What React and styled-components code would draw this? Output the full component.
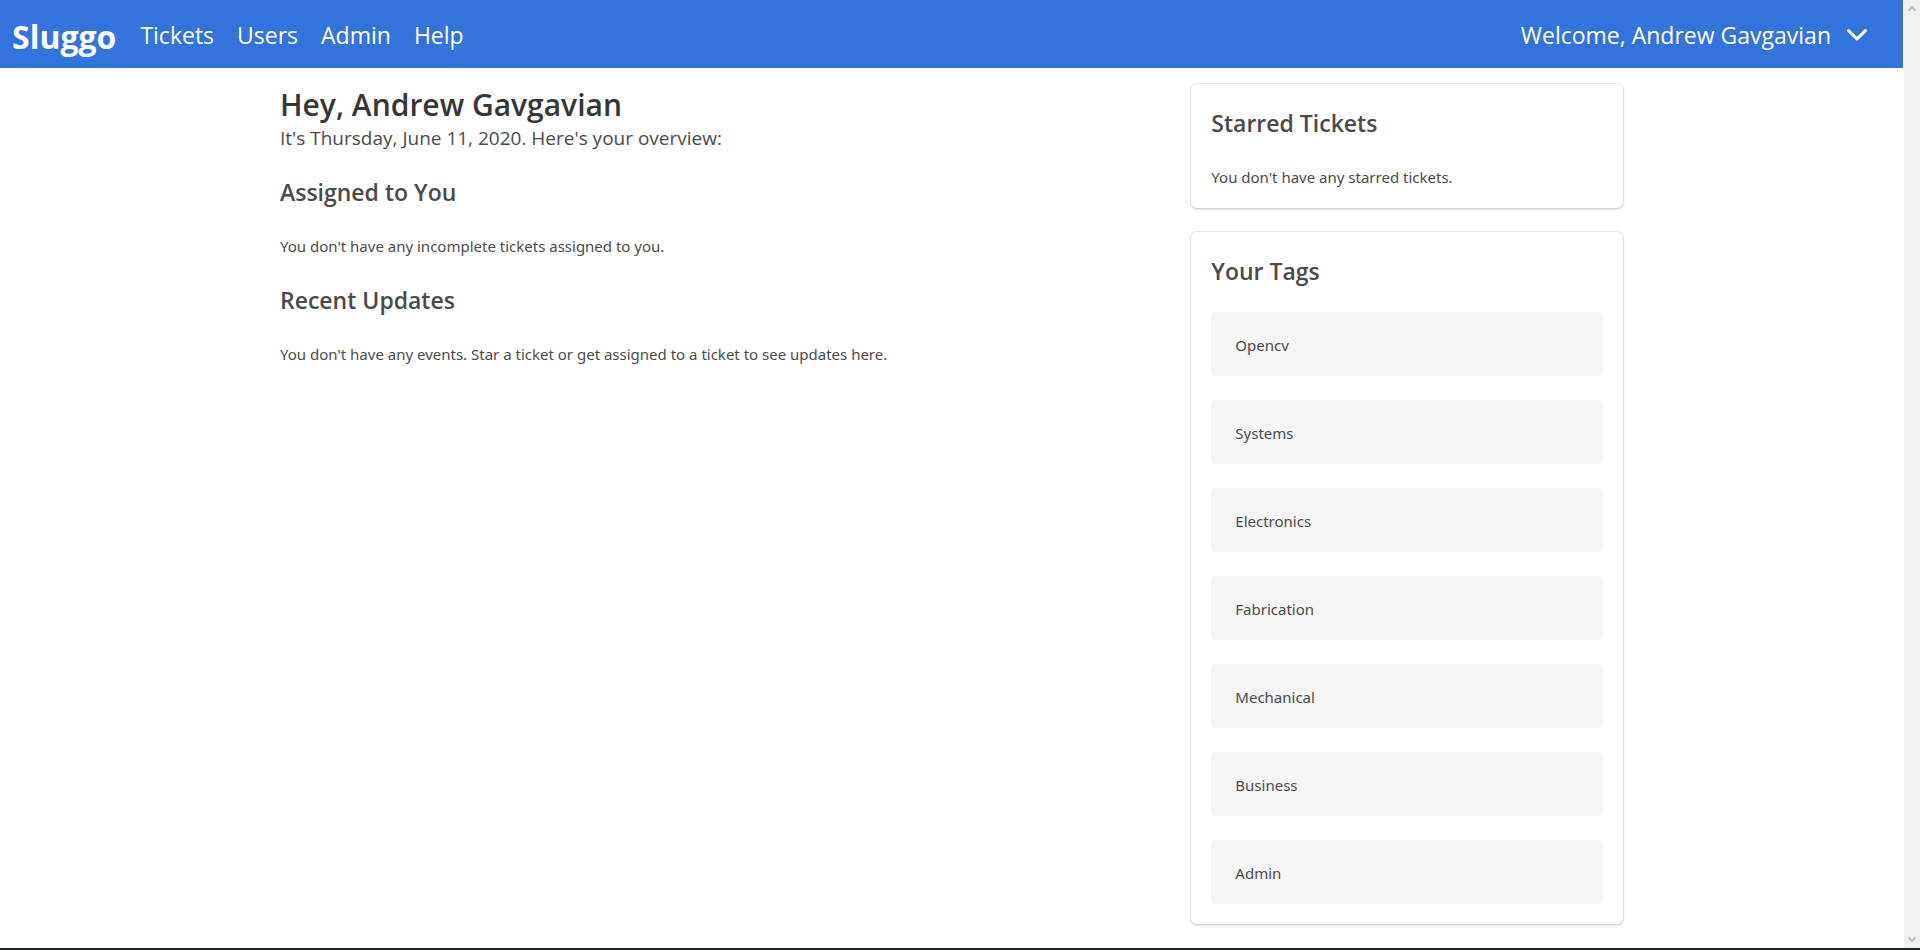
import React from "react";
import styled, { createGlobalStyle } from "styled-components";

const GlobalStyle = createGlobalStyle`
  *, *::before, *::after { box-sizing: border-box; }
  body {
    margin: 0;
    background: #fff;
    color: #4a4a4a;
    font-family: "Segoe UI", "Noto Sans", "Open Sans", sans-serif;
    font-size: 15px;
    line-height: 26px;
  }
  h1, h2, p, ul { margin: 0; padding: 0; font-weight: 400; }
`;

const displayFont = `"Segoe UI", "Open Sans", "Noto Sans", sans-serif`;

const Shell = styled.div`
  display: grid;
  grid-template-columns: minmax(0, 1fr) 17px;
  grid-template-rows: 1fr 2px;
  min-height: 100vh;
`;

const Page = styled.div`
  min-width: 0;
`;

const Navbar = styled.nav`
  display: flex;
  align-items: center;
  min-height: 68px;
  padding: 2px 36px 0 12px;
  background: #3273dc;
  font-family: ${displayFont};
`;

const Brand = styled.a`
  margin-right: 24px;
  padding-top: 3px;
  color: #fff;
  font-size: 32px;
  line-height: 48px;
  font-weight: 700;
  text-decoration: none;
`;

const NavLinks = styled.div`
  display: flex;
  gap: 23px;
  flex: 1;
`;

const NavLink = styled.a`
  color: #fff;
  font-size: 23px;
  line-height: 36px;
  text-decoration: none;
`;

const UserMenu = styled.button`
  display: flex;
  align-items: center;
  gap: 16px;
  padding: 0;
  border: 0;
  background: none;
  color: #fff;
  font: inherit;
  font-size: 23px;
  line-height: 36px;
  cursor: pointer;
`;

const Container = styled.main`
  max-width: 1343px;
  margin: 0 auto;
  padding: 16px 0 24px;
`;

const Columns = styled.div`
  display: flex;
  margin: 0 -12px;
`;

const Column = styled.div`
  flex: 0 0 calc(100% * ${(p) => p.$span} / 12);
  display: flex;
  flex-direction: column;
  gap: ${(p) => p.$gap}px;
  padding: 0 12px;
`;

const Title = styled.h1`
  color: #363636;
  font-family: ${displayFont};
  font-size: 30px;
  line-height: 42px;
  font-weight: 600;
`;

const Subtitle = styled.p`
  font-family: ${displayFont};
  font-size: 19px;
  line-height: 25px;
`;

const Heading = styled.h2`
  margin-bottom: 22px;
  font-family: ${displayFont};
  font-size: 23px;
  line-height: 38px;
  font-weight: 600;
`;

const Card = styled.section`
  padding: 20px 20px ${(p) => p.$bottom}px;
  border-radius: 6px;
  background: #fff;
  box-shadow: 0 2px 3px rgba(10, 10, 10, 0.1), 0 0 0 1px rgba(10, 10, 10, 0.1);
`;

const TagList = styled.ul`
  display: flex;
  flex-direction: column;
  gap: 24px;
  list-style: none;
`;

const Tag = styled.li`
  padding: 20px 24px 18px;
  border-radius: 4px;
  background: #f5f5f5;
`;

const ScrollTrack = styled.div`
  display: flex;
  flex-direction: column;
  justify-content: space-between;
  border-left: 1px solid #fff;
  background: #f0f0f0;
`;

const ScrollButton = styled.button`
  display: flex;
  align-items: center;
  justify-content: center;
  width: 16px;
  height: 17px;
  padding: 0;
  border: 0;
  background: none;
`;

const BottomEdge = styled.div`
  grid-column: 1 / -1;
  background: #20242c;
`;

const links = ["Tickets", "Users", "Admin", "Help"];
const tags = ["Opencv", "Systems", "Electronics", "Fabrication", "Mechanical", "Business", "Admin"];

function MenuChevron() {
  return (
    <svg width="20" height="12" viewBox="0 0 20 12" fill="none" stroke="#fff" strokeWidth="3" strokeLinecap="round" strokeLinejoin="round" aria-hidden="true">
      <path d="M1.6 1.6 10 10 18.4 1.6" />
    </svg>
  );
}

function ScrollArrow({ up }) {
  return (
    <svg width="8" height="7" viewBox="0 0 8 7" fill="none" stroke="#bfbfbf" strokeWidth="2" aria-hidden="true">
      <path d={up ? "M0.5 5.5 4 2 7.5 5.5" : "M0.5 1.5 4 5 7.5 1.5"} />
    </svg>
  );
}

export default function App() {
  return (
    <>
      <GlobalStyle />
      <Shell>
        <Page>
          <Navbar>
            <Brand href="#">Sluggo</Brand>
            <NavLinks>
              {links.map((label) => (
                <NavLink key={label} href={`#${label.toLowerCase()}`}>{label}</NavLink>
              ))}
            </NavLinks>
            <UserMenu type="button">
              Welcome, Andrew Gavgavian
              <MenuChevron />
            </UserMenu>
          </Navbar>
          <Container>
            <Columns>
              <Column $span={8} $gap={22}>
                <header>
                  <Title>Hey, Andrew Gavgavian</Title>
                  <Subtitle>It's Thursday, June 11, 2020. Here's your overview:</Subtitle>
                </header>
                <section>
                  <Heading>Assigned to You</Heading>
                  <p>You don't have any incomplete tickets assigned to you.</p>
                </section>
                <section>
                  <Heading>Recent Updates</Heading>
                  <p>You don't have any events. Star a ticket or get assigned to a ticket to see updates here.</p>
                </section>
              </Column>
              <Column $span={4} $gap={24}>
                <Card $bottom={18}>
                  <Heading>Starred Tickets</Heading>
                  <p>You don't have any starred tickets.</p>
                </Card>
                <Card $bottom={20}>
                  <Heading>Your Tags</Heading>
                  <TagList>
                    {tags.map((tag) => (
                      <Tag key={tag}>{tag}</Tag>
                    ))}
                  </TagList>
                </Card>
              </Column>
            </Columns>
          </Container>
        </Page>
        <ScrollTrack>
          <ScrollButton type="button" aria-label="Scroll up"><ScrollArrow up /></ScrollButton>
          <ScrollButton type="button" aria-label="Scroll down"><ScrollArrow /></ScrollButton>
        </ScrollTrack>
        <BottomEdge />
      </Shell>
    </>
  );
}
